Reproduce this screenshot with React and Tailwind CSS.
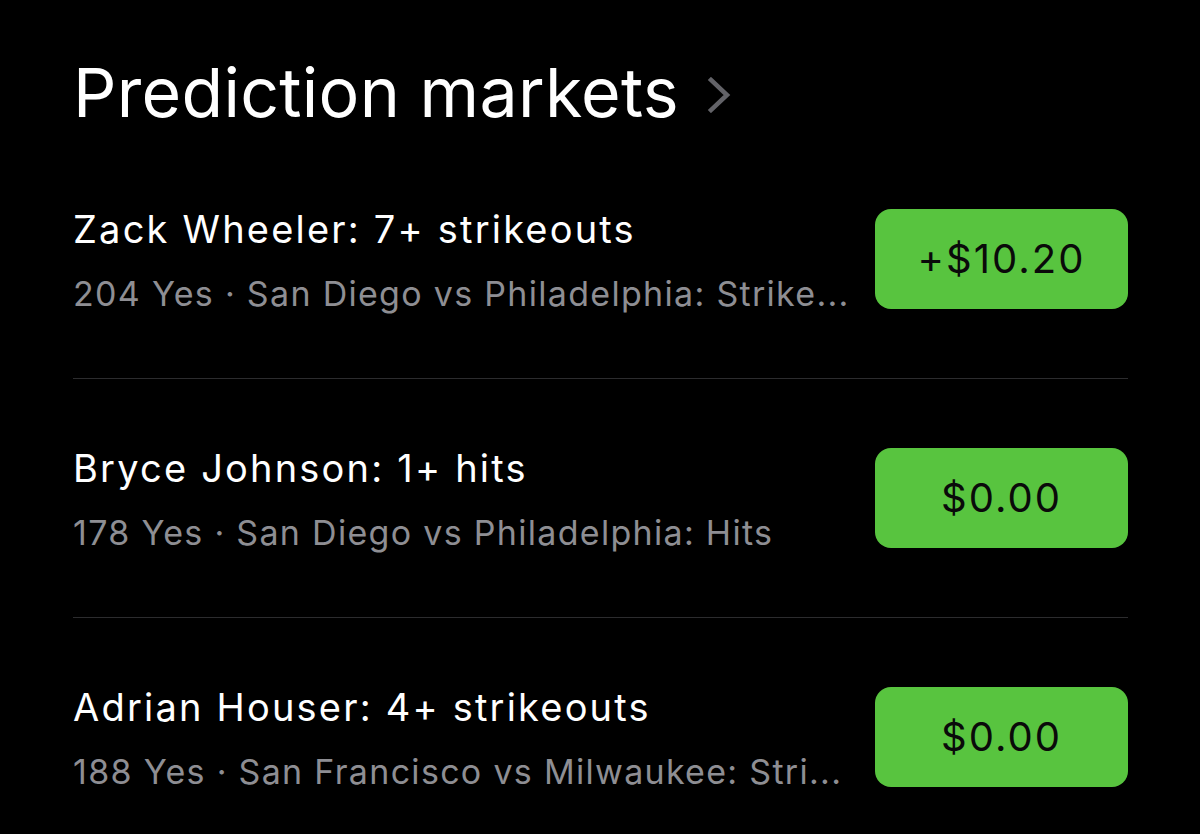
import React from "react";

const rows = [
  {
    title: "Zack Wheeler: 7+ strikeouts",
    sub: "204 Yes · San Diego vs Philadelphia: Strike...",
    value: "+$10.20",
  },
  {
    title: "Bryce Johnson: 1+ hits",
    sub: "178 Yes · San Diego vs Philadelphia: Hits",
    value: "$0.00",
  },
  {
    title: "Adrian Houser: 4+ strikeouts",
    sub: "188 Yes · San Francisco vs Milwaukee: Stri...",
    value: "$0.00",
  },
];

export default function App() {
  return (
    <div
      className="w-[1200px] h-[834px] overflow-hidden bg-black text-white pl-[73px] pr-[72px]"
      style={{ fontFamily: "Inter, 'Noto Sans', sans-serif" }}
    >
      <div className="h-[140px] pt-[58px]">
        <div className="flex items-center gap-[28px]">
          <h1 className="text-[68px] leading-none font-normal tracking-[0.3px]">
            Prediction markets
          </h1>
          <svg
            width="26"
            height="36"
            viewBox="0 0 26 36"
            className="mt-[6px]"
            fill="none"
            stroke="#636368"
            strokeWidth="4.5"
            strokeLinecap="square"
          >
            <path d="M4 3 L20 18 L4 33" />
          </svg>
        </div>
      </div>
      {rows.map((r, i) => (
        <div key={i}>
          {i > 0 && <div className="h-px bg-[#2c2c2e]" />}
          <div className="flex items-center justify-between gap-[20px] h-[238px]">
            <div className="flex flex-col mt-[5px] min-w-0">
              <div className="text-[38px] leading-[60px] tracking-[2.2px] text-white whitespace-nowrap">
                {r.title}
              </div>
              <div className="mt-[5px] text-[34px] leading-[60px] tracking-[1.3px] text-[#8e8e93] whitespace-nowrap">
                {r.sub}
              </div>
            </div>
            <div className="w-[253px] h-[100px] shrink-0 rounded-[16px] bg-[#58c43f] flex items-center justify-center text-[40px] tracking-[2px] text-[#0a0a0a]">
              {r.value}
            </div>
          </div>
        </div>
      ))}
    </div>
  );
}
